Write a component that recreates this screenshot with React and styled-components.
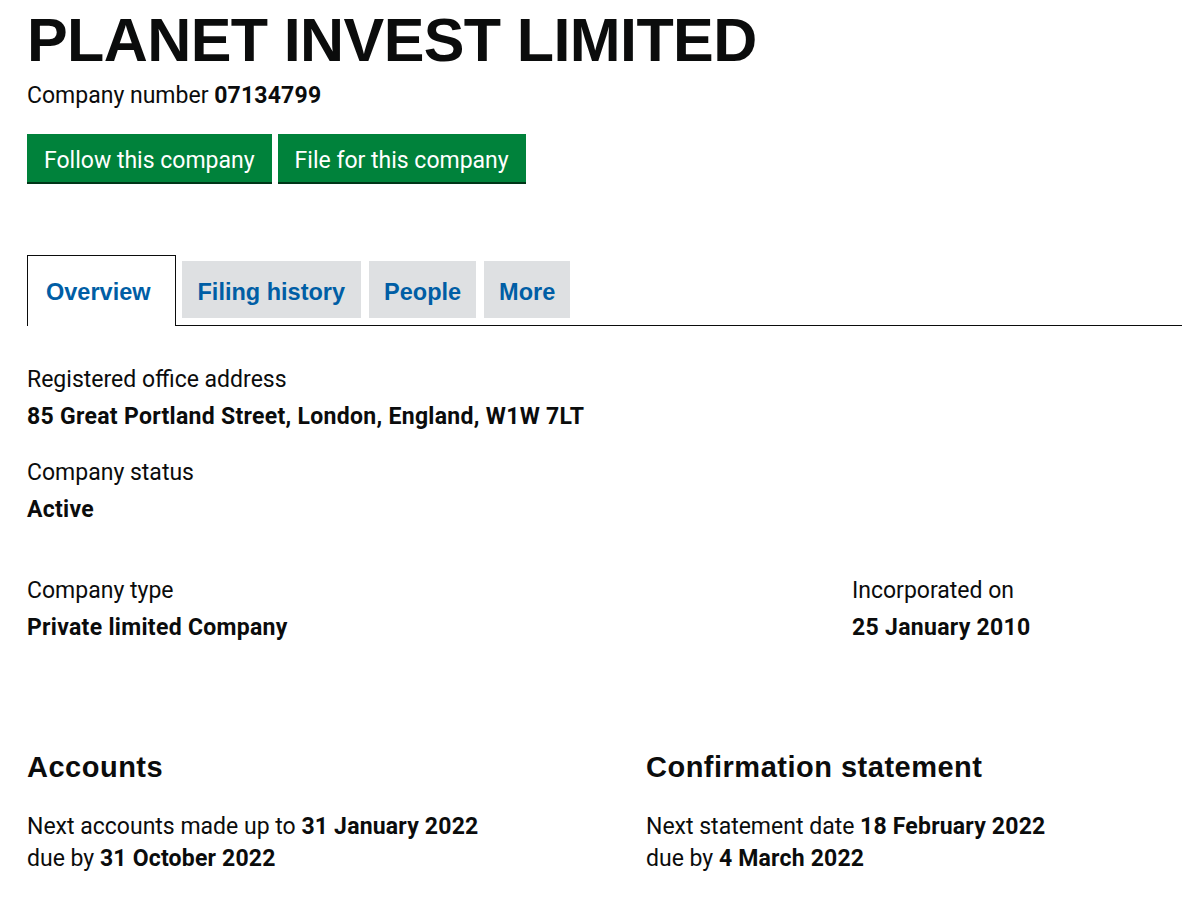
import React from "react";
import styled, { createGlobalStyle } from "styled-components";

const Global = createGlobalStyle`
  html, body { margin: 0; padding: 0; background: #fff; overflow: hidden; }
  body { font-family: "Roboto", "Liberation Sans", sans-serif; color: #0b0c0c; }
`;

const Page = styled.div`
  width: 1238px;
  padding: 8px 0 0 27px;
`;

const Title = styled.h1`
  font-family: "Liberation Sans", Arial, sans-serif;
  font-weight: 700;
  font-size: 61px;
  line-height: 1;
  margin: 2px 0 0;
  letter-spacing: -0.6px;
`;

const Sub = styled.p`
  font-size: 23px;
  margin: 12px 0 0;
  line-height: 25px;
`;

const Strong = styled.strong`
  font-weight: 700;
  letter-spacing: 0.2px;
`;

const Buttons = styled.div`
  display: flex;
  gap: 6px;
  margin-top: 26px;
`;

const Button = styled.button`
  font-family: "Roboto", "Liberation Sans", sans-serif;
  font-size: 23px;
  color: #fff;
  background: #00823b;
  border: 0;
  border-radius: 0;
  box-shadow: 0 2px 0 #003618;
  height: 48px;
  padding: 5px 17px 0;
  cursor: pointer;
`;

const Tabs = styled.div`
  display: flex;
  align-items: flex-start;
  margin-top: 73px;
  border-bottom: 1px solid #0b0c0c;
  gap: 8px;
`;

const Tab = styled.a`
  font-family: "Liberation Sans", Arial, sans-serif;
  font-weight: 700;
  font-size: 23.5px;
  color: #005ea5;
  text-decoration: none;
  display: flex;
  align-items: center;
  box-sizing: border-box;
  ${(p) =>
    p.$active
      ? `
    background: #fff;
    border: 1px solid #0b0c0c;
    border-bottom: 0;
    height: 71px;
    margin-bottom: -1px;
    padding: 3px 24px 0 18px;
    margin-right: -2px;
  `
      : `
    background: #dee0e2;
    height: 57px;
    margin-top: 6px;
    margin-bottom: 7px;
    padding: 5px ${p.$pad}px 0;
  `}
`;

const Field = styled.div`
  margin-top: ${(p) => p.$mt}px;
`;

const Label = styled.div`
  font-size: 23px;
  line-height: 25px;
`;

const Value = styled.div`
  font-size: 23px;
  font-weight: 700;
  line-height: 25px;
  letter-spacing: 0.3px;
  margin-top: 12px;
`;

const Row = styled.div`
  display: grid;
  grid-template-columns: ${(p) => p.$cols};
  margin-top: ${(p) => p.$mt}px;
`;

const H2 = styled.h2`
  font-family: "Liberation Sans", Arial, sans-serif;
  font-weight: 700;
  font-size: 29px;
  letter-spacing: 0.5px;
  line-height: 32px;
  margin: 0;
`;

const Para = styled.p`
  font-size: 23px;
  line-height: 32px;
  margin: 28px 0 0;
`;

export default function App() {
  return (
    <>
      <Global />
      <Page>
        <Title>PLANET INVEST LIMITED</Title>
        <Sub>
          Company number <Strong>07134799</Strong>
        </Sub>
        <Buttons>
          <Button>Follow this company</Button>
          <Button>File for this company</Button>
        </Buttons>
        <Tabs>
          <Tab $active>Overview</Tab>
          <Tab $pad={16}>Filing history</Tab>
          <Tab $pad={15}>People</Tab>
          <Tab $pad={15}>More</Tab>
        </Tabs>
        <Field $mt={41}>
          <Label>Registered office address</Label>
          <Value>85 Great Portland Street, London, England, W1W 7LT</Value>
        </Field>
        <Field $mt={31}>
          <Label>Company status</Label>
          <Value>Active</Value>
        </Field>
        <Row $cols="825px 1fr" $mt={56}>
          <div>
            <Label>Company type</Label>
            <Value>Private limited Company</Value>
          </div>
          <div>
            <Label>Incorporated on</Label>
            <Value>25 January 2010</Value>
          </div>
        </Row>
        <Row $cols="619px 1fr" $mt={111}>
          <div>
            <H2>Accounts</H2>
            <Para>
              Next accounts made up to <Strong>31 January 2022</Strong>
              <br />
              due by <Strong>31 October 2022</Strong>
            </Para>
          </div>
          <div>
            <H2>Confirmation statement</H2>
            <Para>
              Next statement date <Strong>18 February 2022</Strong>
              <br />
              due by <Strong>4 March 2022</Strong>
            </Para>
          </div>
        </Row>
      </Page>
    </>
  );
}
